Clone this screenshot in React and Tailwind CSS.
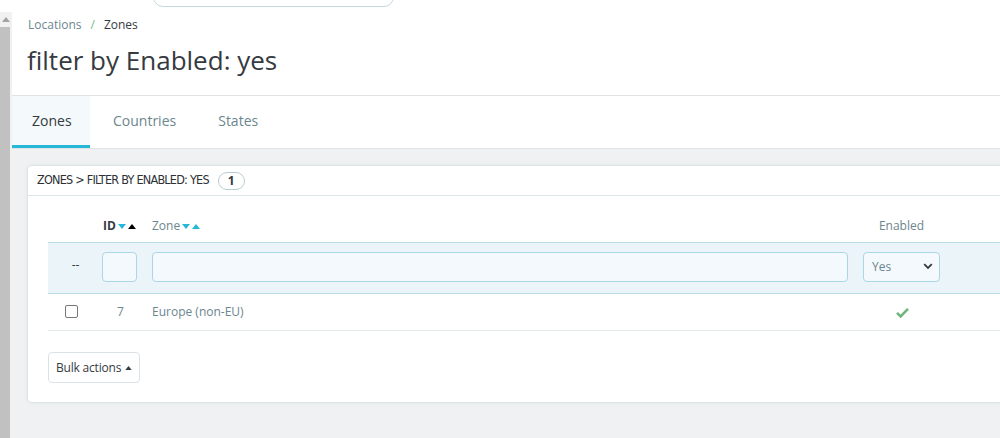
import React from 'react';

const Caret = ({ up = false, color = '#25b9d7', w = 8, h = 5 }) => (
  <svg width={w} height={h} viewBox="0 0 8 5" className="inline-block">
    {up ? <path d="M0 5L4 0L8 5Z" fill={color} /> : <path d="M0 0L8 0L4 5Z" fill={color} />}
  </svg>
);

const Check = () => (
  <svg width="13" height="11" viewBox="0 0 13 11">
    <path d="M1 5.8L4.6 9.4L12 1.8" fill="none" stroke="#70b580" strokeWidth="2.6" />
  </svg>
);

export default function App() {
  return (
    <div className="w-[1000px] h-[438px] overflow-hidden flex bg-[#eff1f2] text-[#363a41]" style={{ fontFamily: '"Open Sans", "Liberation Sans", sans-serif' }}>
      {/* scrollbar strip */}
      <div className="w-[12px] shrink-0 flex flex-col bg-white">
        <div className="h-[12px]" />
        <div className="h-[15px] bg-[#f1f1f1] flex items-center justify-center">
          <Caret up color="#a3a3a3" />
        </div>
        <div className="flex-1 flex">
          <div className="w-[10px] bg-[#c1c1c1]" />
          <div className="w-[2px] bg-[#f1f1f1]" />
        </div>
      </div>

      <div className="flex-1 flex flex-col min-w-0">
        {/* header */}
        <div className="bg-white border-b border-[#dfe3e6] h-[96px] shrink-0 flex flex-col">
          <div className="h-[7px] overflow-hidden flex items-end pl-[141px]">
            <div className="w-[241px] h-[30px] border border-[#c5d9de] rounded-[10px] shrink-0" />
          </div>
          <div className="pl-[16px] pt-[10px] text-[12px] leading-[16px] flex gap-[9px]">
            <span className="text-[#6c868e]">Locations</span>
            <span className="text-[#72c279]">/</span>
            <span className="text-[#363a41]">Zones</span>
          </div>
          <h1 className="pl-[15px] pt-[11px] text-[26px] leading-[32px] text-[#363a41]">filter by Enabled: yes</h1>
        </div>

        {/* tabs */}
        <div className="bg-white border-b border-[#dfe3e6] h-[53px] shrink-0 flex">
          <div className="w-[78px] pl-[20px] bg-[#f4f9fb] border-b-[3px] border-[#25b9d7] flex items-center text-[14px] text-[#363a41]">Zones</div>
          <div className="pl-[23px] pr-[19px] flex items-center text-[14px] text-[#6c868e] pb-[3px]">Countries</div>
          <div className="pl-[23px] flex items-center text-[14px] text-[#6c868e] pb-[3px]">States</div>
        </div>

        {/* card */}
        <div className="pl-[15px] pt-[16px]">
          <div className="w-[1000px] bg-white border border-[#dbe6e9] rounded-[5px] shadow-[0_0_4px_rgba(0,0,0,0.06)]">
            <div className="h-[30px] border-b border-[#dbe6e9] flex items-center pl-[9px] gap-[9px]">
              <span className="text-[12.5px] uppercase text-[#2d3036] tracking-[-0.75px]" style={{ fontFamily: '"DejaVu Sans Condensed", "DejaVu Sans", sans-serif', fontStretch: 'condensed' }}>
                Zones &gt; filter by Enabled: yes
              </span>
              <span className="h-[18px] px-[9px] rounded-full border border-[#bbcdd2] text-[12px] font-bold flex items-center leading-none">1</span>
            </div>

            <div className="pl-[20px] pt-[14px]">
              {/* column headings */}
              <div className="h-[32px] flex items-center text-[12px]">
                <div className="w-[55px]" />
                <div className="w-[49px] flex items-center gap-[2px] font-bold">
                  <span>ID</span>
                  <Caret />
                  <Caret up color="#000" />
                </div>
                <div className="w-[711px] flex items-center gap-[2px] text-[#6c868e]">
                  <span>Zone</span>
                  <Caret />
                  <Caret up />
                </div>
                <div className="w-[77px] text-center text-[#6c868e]">Enabled</div>
              </div>

              {/* filters row */}
              <div className="h-[52px] bg-[#eaf4f9] border-y border-[#bbdbe8] flex items-center text-[12px] pb-[3px]">
                <div className="w-[55px] text-center text-[#363a41] pb-[3px]">--</div>
                <div className="w-[49px]">
                  <div className="w-[35px] h-[30px] rounded-[4px] border border-[#abd6e6] bg-[#f3f9fc] -ml-px" />
                </div>
                <div className="w-[711px] pr-[15px]">
                  <div className="h-[30px] rounded-[4px] border border-[#abd6e6] bg-[#f3f9fc]" />
                </div>
                <div className="w-[77px] h-[30px] rounded-[4px] border border-[#abd6e6] bg-[#f3f9fc] flex items-center justify-between pl-[8px] pr-[6px] text-[#6c868e]">
                  <span>Yes</span>
                  <svg width="10" height="7" viewBox="0 0 10 7">
                    <path d="M1.2 1.2L5 5L8.8 1.2" fill="none" stroke="#363a41" strokeWidth="1.8" />
                  </svg>
                </div>
              </div>

              {/* data row */}
              <div className="h-[37px] border-b border-[#e3eaec] flex items-center text-[12px] text-[#6c868e]">
                <div className="w-[55px] pl-[17px] pb-[2px]">
                  <div className="w-[13px] h-[13px] rounded-[2px] border border-[#777] bg-white" />
                </div>
                <div className="w-[49px] text-center pr-[14px] text-[#6c868e]">7</div>
                <div className="w-[711px]">Europe (non-EU)</div>
                <div className="w-[77px] flex justify-center pl-[1px]">
                  <Check />
                </div>
              </div>

              <div className="pt-[21px] pb-[19px]">
                <div className="inline-flex items-center gap-[4px] h-[31px] pl-[7px] pr-[7px] border border-[#dbe2e5] rounded-[4px] text-[12px] text-[#363a41]">
                  <span className="tracking-[-0.2px]">Bulk actions</span>
                  <Caret up color="#363a41" w={7} h={4} />
                </div>
              </div>
            </div>
          </div>
        </div>
      </div>
    </div>
  );
}
